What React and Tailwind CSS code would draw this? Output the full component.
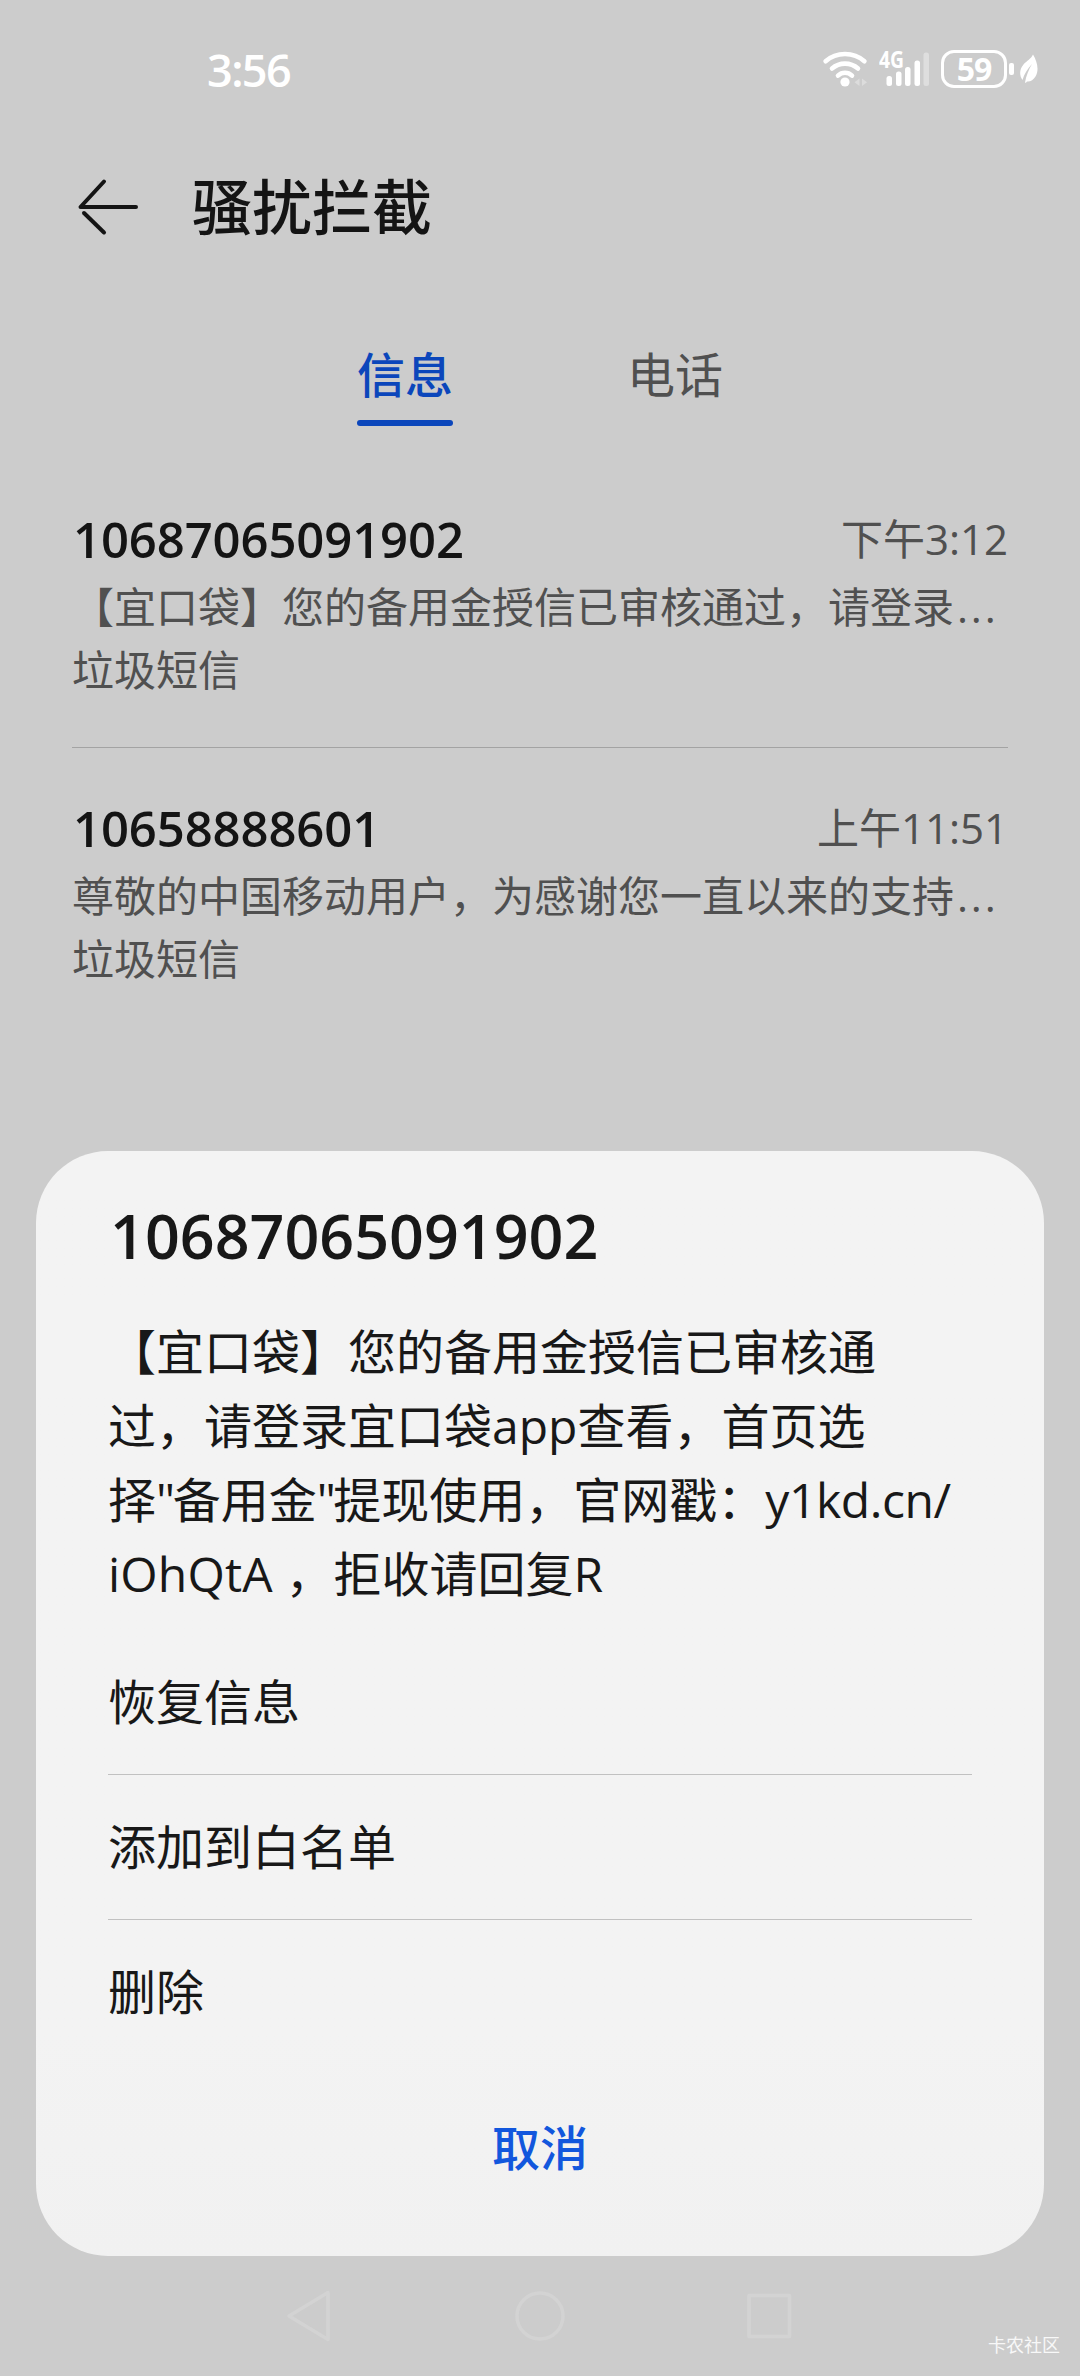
const messages = [
  {
    number: '10687065091902',
    time: '下午3:12',
    preview: '【宜口袋】您的备用金授信已审核通过，请登录',
    tag: '垃圾短信',
  },
  {
    number: '10658888601',
    time: '上午11:51',
    preview: '尊敬的中国移动用户，为感谢您一直以来的支持',
    tag: '垃圾短信',
  },
];

const actions = ['恢复信息', '添加到白名单', '删除'];

function WifiIcon() {
  return (
    <svg className="h-[38px] w-[48px]" viewBox="0 0 48 38" fill="none" stroke="#fff" strokeWidth="4.6" strokeLinecap="round">
      <path d="M4.6 11.2C15.5 1.6 32.500 1.6 43.400 11.200" />
      <path d="M11 18.600C18.500 12 29.500 12 37 18.600" />
      <path d="M17 25.600C21 21.800 27 21.800 31 25.600" />
      <circle cx="24" cy="32" r="4.600" fill="#fff" stroke="none" />
      <path d="M38.500 28.500V36L33.500 32.300ZM41 28.500V36L46 32.300Z" fill="#dcdcdc" stroke="none" />
    </svg>
  );
}

function SignalIcon() {
  return (
    <div className="relative h-[38px] w-[52px]">
      <svg className="h-[38px] w-[52px]" viewBox="0 0 52 38" fill="#fff">
        <rect x="7.500" y="26" width="5.500" height="10" rx="2.500" />
        <rect x="17" y="21.500" width="5.500" height="14.500" rx="2.500" />
        <rect x="26" y="17" width="5.500" height="19" rx="2.500" />
        <rect x="35.500" y="10.500" width="5.500" height="25.500" rx="2.500" />
        <rect x="44.500" y="2.500" width="5.500" height="33.500" rx="2.500" fill="#dedede" />
      </svg>
      <span className="absolute -top-[3px] left-0 origin-left scale-x-[0.84] text-[23px] leading-[24px] font-bold">4G</span>
    </div>
  );
}

function LeafIcon() {
  return (
    <svg className="h-[32px] w-[20px]" viewBox="0 0 20 32">
      <path d="M14 1.500C18 8 20.500 17 16.500 23.500C14.500 27 11 29 8 28.500C7.500 29.500 7 30 6 29.500C7 23 10 16 13 11C8.500 15.500 5 21.500 3.500 27C0 22.500 0.500 16 4.500 11.500C8 7.500 12 6 14 1.500Z" fill="#fff" />
    </svg>
  );
}

function BackArrow() {
  return (
    <svg className="h-[60px] w-[64px]" viewBox="0 0 64 60" fill="none" stroke="#141414" strokeWidth="4" strokeLinecap="round" strokeLinejoin="round">
      <path d="M60 30H4.500L28 4.500" />
      <path d="M8 36L28 55.500" />
    </svg>
  );
}

function StatusBar() {
  return (
    <header className="flex h-[138px] items-center justify-between pr-[41px] pl-[207px] text-white">
      <span className="pt-[2px] text-[45px] leading-[60px] font-semibold tracking-[-1.6px]">3:56</span>
      <div className="flex items-center">
        <WifiIcon />
        <div className="ml-[10px]">
          <SignalIcon />
        </div>
        <div className="ml-[10px] flex h-[38px] w-[66px] items-center justify-center rounded-[13px] border-[3px] border-white">
          <span className="text-[32px] leading-[34px] font-bold tracking-[-1px]">59</span>
        </div>
        <div className="ml-[2px] h-[12px] w-[5px] rounded-[2px] bg-white" />
        <div className="ml-[5px]">
          <LeafIcon />
        </div>
      </div>
    </header>
  );
}

function MessageRow({ message, divided }) {
  return (
    <li className="pt-[47px]">
      <div className="flex h-[66px] items-center justify-between leading-[66px]">
        <span className="pl-px text-[49px] font-semibold tracking-[-0.1px] text-[#141414]">{message.number}</span>
        <span className="text-[42px]">{message.time}</span>
      </div>
      <p className="h-[70px] text-[42px] leading-[70px] whitespace-nowrap">
        {message.preview}
        <span className="pl-[3px] tracking-[2.8px]">...</span>
      </p>
      <p className="h-[56px] text-[42px] leading-[56px]">{message.tag}</p>
      {divided && <div className="mt-[49px] h-px bg-[#a3a3a3]" />}
    </li>
  );
}

function MessageDialog() {
  return (
    <section className="absolute top-[1151px] right-[36px] left-[36px] flex h-[1105px] flex-col rounded-[72px] bg-linear-to-b from-[#f3f3f3] from-80% to-[#f1f1f1] px-[72px] pt-[50px] text-[48px] text-[#181818]">
      <h2 className="h-[70px] pl-[2px] text-[61px] leading-[70px] font-semibold">10687065091902</h2>
      <div className="mt-[44px] leading-[74px] whitespace-nowrap">
        <p>【宜口袋】您的备用金授信已审核通</p>
        <p>过，请登录宜口袋app查看，首页选</p>
        <p>
          择<span className="tracking-[-2.5px]">"</span>备用金<span className="tracking-[-2.5px]">"</span>
          提现使用，官网戳：<span className="tracking-[-0.4px]">y1kd.cn/</span>
        </p>
        <p><span className="tracking-[0.2px]">iOhQtA </span>，拒收请回复R</p>
      </div>
      <ul className="mt-[19px] divide-y divide-[#c1c1c1]">
        {actions.map((action) => (
          <li key={action} className="box-content h-[144px] leading-[144px]">{action}</li>
        ))}
      </ul>
      <button className="mt-[48px] h-[72px] leading-[72px] font-medium text-[#1257dd]">取消</button>
    </section>
  );
}

function NavigationBar() {
  return (
    <nav className="flex h-[120px] items-center justify-center gap-[170px]">
      <svg className="h-[60px] w-[60px]" viewBox="0 0 60 60" fill="none" stroke="#d3d3d3" strokeWidth="3.500" strokeLinejoin="round">
        <path d="M48 6.500V53.500L9 30Z" />
      </svg>
      <svg className="h-[60px] w-[60px]" viewBox="0 0 60 60" fill="none" stroke="#d3d3d3" strokeWidth="3.500">
        <circle cx="30" cy="30" r="23" />
      </svg>
      <svg className="h-[60px] w-[60px]" viewBox="0 0 60 60" fill="none" stroke="#d3d3d3" strokeWidth="3.500" strokeLinejoin="round">
        <rect x="9" y="9.500" width="40.500" height="41" />
      </svg>
    </nav>
  );
}

export default function App() {
  return (
    <main
      lang="zh-CN"
      className="relative flex h-[2376px] w-[1080px] flex-col overflow-hidden bg-[#cccccc] font-['Open_Sans','Noto_Sans_CJK_SC',sans-serif] text-[#505050] [text-spacing-trim:space-all]"
    >
      <StatusBar />
      <div className="flex h-[138px] items-center pl-[76px]">
        <BackArrow />
        <h1 className="ml-[52px] text-[60px] leading-[80px] font-medium text-[#141414]">骚扰拦截</h1>
      </div>
      <div className="flex justify-center gap-[174px] pt-[69px] text-[48px] leading-[60px]">
        <div className="w-[96px] font-medium text-[#0b46bb]">
          信息
          <div className="mt-[15px] h-[6px] rounded-full bg-[#0b46bb]" />
        </div>
        <div className="w-[96px]">电话</div>
      </div>
      <ul className="mt-[33px] flex-1 px-[72px]">
        {messages.map((message, i) => (
          <MessageRow key={message.number} message={message} divided={i < messages.length - 1} />
        ))}
      </ul>
      <NavigationBar />
      <MessageDialog />
      <span className="absolute right-[20px] bottom-[18px] text-[18px] leading-[26px] text-[#f8f8f8]">卡农社区</span>
    </main>
  );
}
